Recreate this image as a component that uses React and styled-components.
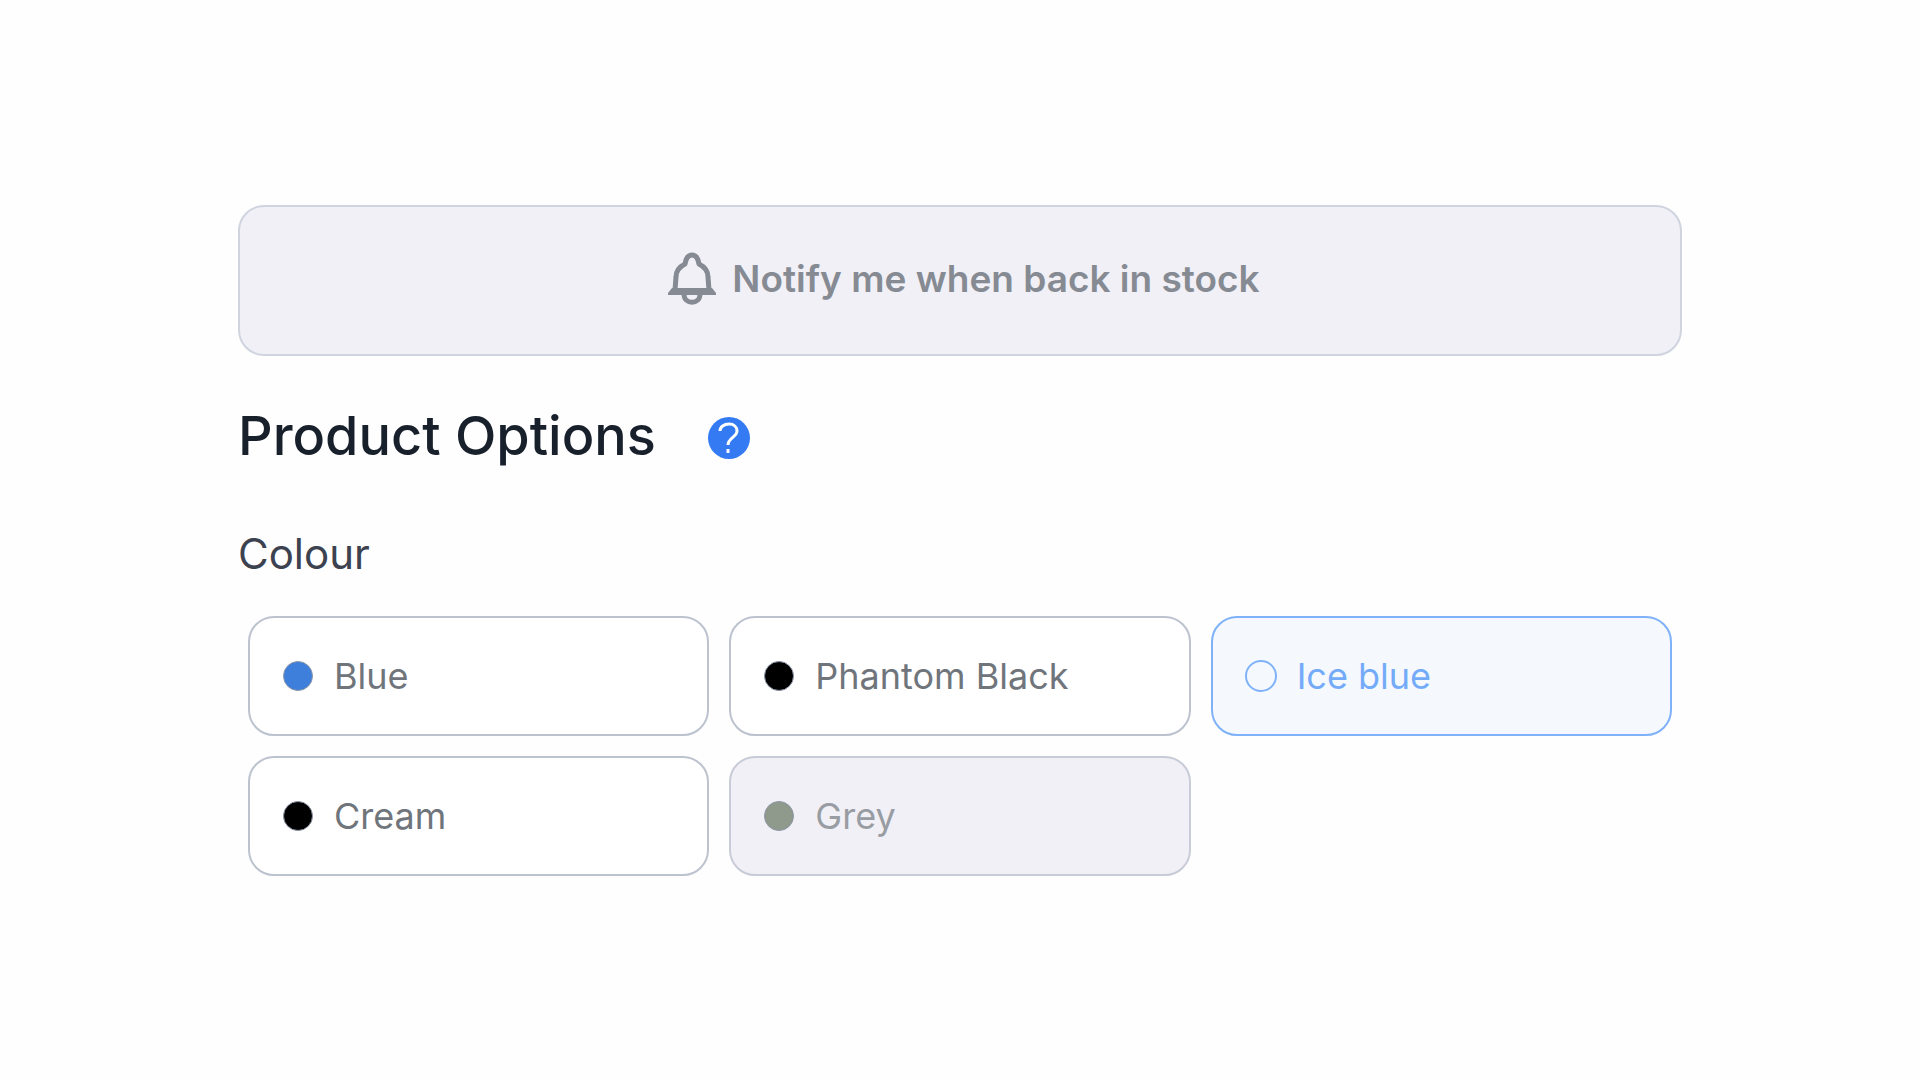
import { useState } from 'react';
import styled, { createGlobalStyle } from 'styled-components'


const GlobalStyle = createGlobalStyle`
    * {
        box-sizing: border-box;
    }

    body {
        margin: 0;
        background: #fefefe;
        font-family: Inter, Arial, sans-serif;
    }
`

const App = () => {

    const colours = [
        { name: "Blue", swatch: "#3e7fdc" },
        { name: "Phantom Black", swatch: "#000000" },
        { name: "Ice blue", swatch: "transparent" },
        { name: "Cream", swatch: "#000000" },
        { name: "Grey", swatch: "#8f998c", soldOut: true }
    ]

    const [selectedColour, changeSelectedColour] = useState("Ice blue");

    const colourList = colours.map((colour) => {
        return (
            <Option key={colour.name} $active={colour.name === selectedColour} $soldOut={colour.soldOut}>
                <Swatch
                    type="radio"
                    name="colour"
                    value={colour.name}
                    checked={colour.name === selectedColour}
                    disabled={colour.soldOut}
                    onChange={() => changeSelectedColour(colour.name)}
                    $colour={colour.swatch}
                />
                {colour.name}
            </Option>
        );
    })

    return (
        <Main>
            <GlobalStyle />
            <NotifyButton type="button">
                <BellIcon viewBox="0 0 48 54" aria-hidden="true">
                    <path d="M7 38L8 25C8 19 11 15 17 12C18 6 20 3 24 3S30 6 31 12C37 15 40 19 40 25L41 38" />
                    <path d="M16 42C16 53 32 53 32 42" />
                    <BellBase d="M4 36H44L48 41V43H0V41Z" />
                </BellIcon>
                Notify me when back in stock
            </NotifyButton>
            <Header>
                <Heading>Product Options</Heading>
                <HelpButton type="button" aria-label="Help">
                    <HelpIcon viewBox="0 0 42 42" aria-hidden="true">
                        <path d="M12 14C12 10 16 7 21 7C26 7 29 10 29 14C29 20 20 21 20 28" />
                        <path d="M20 32V36" />
                    </HelpIcon>
                </HelpButton>
            </Header>
            <Fieldset>
                <Legend>Colour</Legend>
                <Options>
                    {colourList}
                </Options>
            </Fieldset>
        </Main>
    );
};

const Main = styled.main`
    width: 76%;
    max-width: 1444px;
    margin: 0 auto;
    padding: 205px 0 64px;
`

const NotifyButton = styled.button`
    display: flex;
    align-items: center;
    justify-content: center;
    gap: 16px;
    width: 100%;
    min-height: 151px;
    padding: 0 24px 4px 32px;
    border: 2px solid #cfd4de;
    border-radius: 26px;
    background: #f1f0f6;
    color: #868b93;
    font-family: inherit;
    font-size: 37px;
    font-weight: 600;
    line-height: 48px;
    cursor: pointer;
`

const BellIcon = styled.svg`
    width: 48px;
    height: 54px;
    fill: none;
    stroke: currentColor;
    stroke-width: 5;
    stroke-linejoin: round;
`

const BellBase = styled.path`
    fill: currentColor;
    stroke: none;
`

const Header = styled.header`
    display: flex;
    align-items: center;
    gap: 52px;
    margin-top: 48px;
`

const Heading = styled.h1`
    margin: 0;
    color: #18202c;
    font-size: 54px;
    font-weight: 500;
    line-height: 64px;
`

const HelpButton = styled.button`
    display: flex;
    margin-top: 4px;
    padding: 0;
    border: 0;
    border-radius: 50%;
    background: #347af2;
    color: #ffffff;
    cursor: pointer;
`

const HelpIcon = styled.svg`
    width: 42px;
    height: 42px;
    fill: none;
    stroke: currentColor;
    stroke-width: 3;
`

const Fieldset = styled.fieldset`
    min-width: 0;
    margin: 60px 0 0;
    padding: 0;
    border: 0;
`

const Legend = styled.legend`
    padding: 0;
    color: #3c4250;
    font-size: 42px;
    line-height: 52px;
`

const Options = styled.div`
    display: grid;
    grid-template-columns: repeat(3, 1fr);
    gap: 20px;
    padding: 36px 10px 0;
`

const Option = styled.label`
    display: flex;
    align-items: center;
    gap: 20px;
    min-height: 120px;
    padding: 0 32px;
    border: 2px solid ${props => props.$active ? "#7fb2f8" : props.$soldOut ? "#c8ccd7" : "#bcc3cf"};
    border-radius: 26px;
    background: ${props => props.$active ? "#f5f9fe" : props.$soldOut ? "#f1f0f6" : "#ffffff"};
    color: ${props => props.$active ? "#74abf8" : props.$soldOut ? "#989ca3" : "#70757c"};
    font-size: 36px;
    cursor: ${props => props.$soldOut ? "not-allowed" : "pointer"};
`

const Swatch = styled.input`
    appearance: none;
    flex: none;
    width: ${props => props.$colour === "transparent" ? "32px" : "30px"};
    height: ${props => props.$colour === "transparent" ? "32px" : "30px"};
    margin: ${props => props.$colour === "transparent" ? "0" : "1px"};
    border: ${props => props.$colour === "transparent" ? "2px solid #7fb2f8" : "1px solid #8d97a8"};
    border-radius: 50%;
    background: ${props => props.$colour};
    cursor: inherit;
`

export default App;
